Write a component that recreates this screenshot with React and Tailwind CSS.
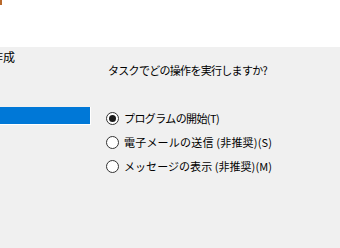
import React from "react";

const options = [
  { label: "プログラムの開始(T)", checked: true, track: "tracking-[-0.6px]" },
  { label: "電子メールの送信 (非推奨)(S)", checked: false, track: "tracking-[0.2px]" },
  { label: "メッセージの表示 (非推奨)(M)", checked: false, track: "tracking-[0.05px]" },
];

const Radio = ({ checked }) => (
  <span className="w-[13px] h-[13px] rounded-full border border-[#333333] bg-white flex items-center justify-center shrink-0">
    {checked && <span className="w-[7px] h-[7px] rounded-full bg-[#1a1a1a]" />}
  </span>
);

const App = () => {
  return (
    <div
      className="w-[340px] h-[248px] bg-[#f0f0f0] overflow-hidden text-black"
      style={{ fontFamily: '"Noto Sans CJK JP", "Noto Sans", sans-serif' }}
    >
      {/* header */}
      <div className="h-[47px] bg-white">
        <div className="w-[2px] h-[5px] bg-[#b8692c]" />
      </div>

      <div className="flex">
        {/* left step list */}
        <div className="w-[91px] flex flex-col">
          <div className="w-[15px] overflow-hidden flex justify-end">
            <span className="whitespace-nowrap text-[12px] leading-[16px] mt-[2px]">
              基本タスクの作成
            </span>
          </div>
          <div className="mt-[42px] h-[18px] bg-white pr-px pb-px">
            <div className="h-full bg-[#0078d7]" />
          </div>
        </div>

        {/* right content */}
        <div className="pl-[15px] pt-[15px] text-[11px]">
          <p className="pl-[2px] leading-[16px] tracking-[-0.7px]">
            タスクでどの操作を実行しますか?
          </p>
          <div className="mt-[32px] flex flex-col gap-[8px]">
            {options.map((o) => (
              <label key={o.label} className="flex items-center gap-[5px] leading-[16px]">
                <Radio checked={o.checked} />
                <span className={o.track}>{o.label}</span>
              </label>
            ))}
          </div>
        </div>
      </div>
    </div>
  );
};

export default App;
